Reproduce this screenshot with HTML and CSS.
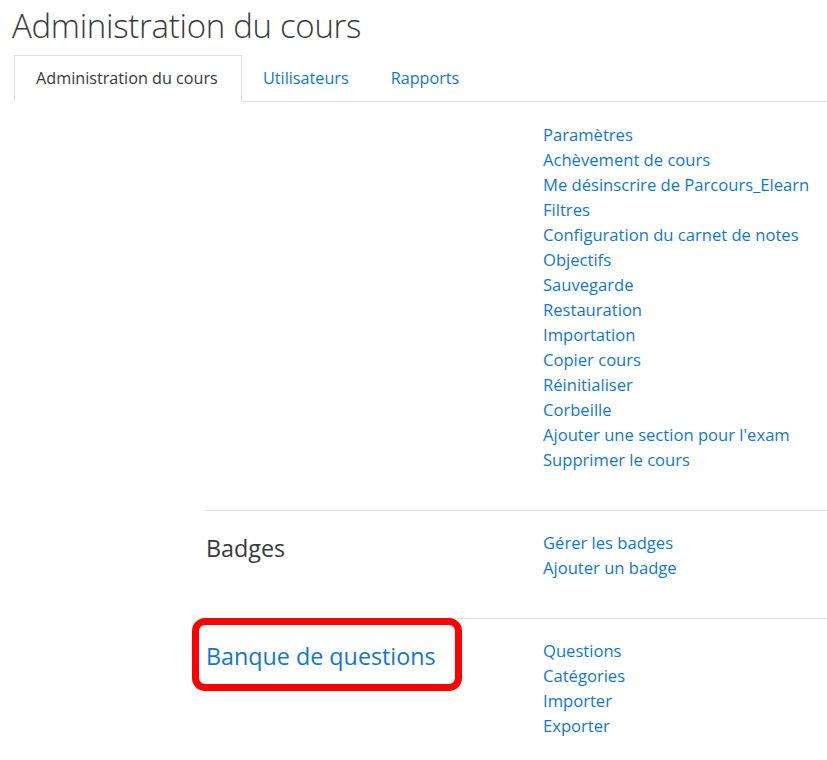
FILE: index.html
```html
<!DOCTYPE html>
<html lang="fr">
<head>
<meta charset="utf-8">
<link rel="stylesheet" href="styles.css">
</head>
<body>
<h1 class="title">Administration du cours</h1>
<nav class="tabs">
  <span class="tab active">Administration du cours</span>
  <a class="tab" href="#">Utilisateurs</a>
  <a class="tab" href="#">Rapports</a>
</nav>
<div class="content">
  <section class="row first">
    <div class="head"></div>
    <ul class="links">
      <li><a href="#">Paramètres</a></li>
      <li><a href="#">Achèvement de cours</a></li>
      <li><a href="#">Me désinscrire de Parcours_Elearn</a></li>
      <li><a href="#">Filtres</a></li>
      <li><a href="#">Configuration du carnet de notes</a></li>
      <li><a href="#">Objectifs</a></li>
      <li><a href="#">Sauvegarde</a></li>
      <li><a href="#">Restauration</a></li>
      <li><a href="#">Importation</a></li>
      <li><a href="#">Copier cours</a></li>
      <li><a href="#">Réinitialiser</a></li>
      <li><a href="#">Corbeille</a></li>
      <li><a href="#">Ajouter une section pour l'exam</a></li>
      <li><a href="#">Supprimer le cours</a></li>
    </ul>
  </section>
  <section class="row">
    <div class="head"><h3 class="heading">Badges</h3></div>
    <ul class="links">
      <li><a href="#">Gérer les badges</a></li>
      <li><a href="#">Ajouter un badge</a></li>
    </ul>
  </section>
  <section class="row">
    <div class="head"><h3 class="heading link-heading"><a href="#">Banque de questions</a><span class="highlight"></span></h3></div>
    <ul class="links">
      <li><a href="#">Questions</a></li>
      <li><a href="#">Catégories</a></li>
      <li><a href="#">Importer</a></li>
      <li><a href="#">Exporter</a></li>
    </ul>
  </section>
</div>
</body>
</html>
```
FILE: styles.css
```css
* { box-sizing: border-box; }
html, body { margin: 0; padding: 0; background: #fff; }
body {
  font-family: "Open Sans", "Noto Sans", sans-serif;
  color: #373a3c;
  overflow: hidden;
  width: 827px;
  height: 760px;
}
a { color: #1177d1; text-decoration: none; }
.title {
  margin: 0;
  padding: 3px 0 0 12px;
  font-weight: 300;
  font-size: 33px;
  line-height: 45px;
  color: #373a3c;
  letter-spacing: -0.3px;
}
.tabs {
  display: flex;
  margin: 7px 0 0 14px;
  border-bottom: 1px solid #dee2e6;
  font-size: 16.2px;
  white-space: nowrap;
}
.tab {
  display: block;
  height: 47px;
  line-height: 45px;
  padding: 0 20px;
  border: 1px solid transparent;
  margin-bottom: -1px;
}
.tab.active {
  border-color: #dee2e6 #dee2e6 #fff;
  color: #373a3c;
  padding: 0 20px 0 21px;
  width: 228px;
}
.content { padding-left: 205px; }
.row {
  display: flex;
  border-top: 1px solid #e0e3e6;
  padding: 19px 0 0;
}
.row.first { border-top: none; padding-top: 20px; height: 408px; }
.row:nth-child(2) { height: 108px; }
.head { width: 338px; flex: none; padding-left: 1px; padding-top: 2px; }
.heading {
  margin: 0;
  font-weight: 400;
  font-size: 23.3px;
  line-height: 32px;
  color: #373a3c;
  position: relative;
}
.link-heading { display: inline-block; }
.highlight {
  position: absolute;
  left: -14px;
  top: -22px;
  width: 270px;
  height: 73px;
  border: 7px solid #ff0000;
  border-radius: 13px;
}
.links {
  list-style: none;
  margin: 0;
  padding: 0;
  font-size: 16.6px;
  line-height: 25px;
}
```
